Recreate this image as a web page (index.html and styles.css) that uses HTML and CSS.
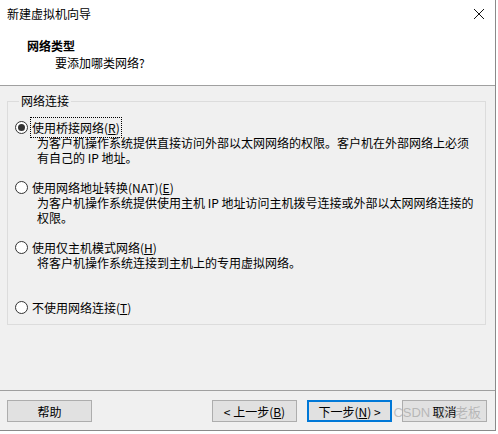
FILE: index.html
```html
<!DOCTYPE html>
<html lang="zh-CN">
<head>
    <meta charset="UTF-8">
    <title>新建虚拟机向导</title>
    <link rel="stylesheet" href="styles.css">
</head>
<body>
    <div class="wizard">
        <div class="wizard-top">
            <div class="titlebar">
                <span class="title">新建虚拟机向导</span>
                <svg class="close" width="12" height="12" viewBox="0 0 12 12">
                    <path d="M1 1 L11 11 M11 1 L1 11" stroke="#111" stroke-width="1" fill="none"/>
                </svg>
            </div>
            <div class="header">
                <div class="header-title">网络类型</div>
                <div class="header-sub">要添加哪类网络?</div>
            </div>
        </div>

        <div class="wizard-body">
            <fieldset class="group">
                <legend>网络连接</legend>
                <div class="options">
                    <div class="option">
                        <div class="option-label">
                            <span class="radio checked"></span>
                            <span class="focus">使用桥接网络(<u>R</u>)</span>
                        </div>
                        <div class="option-desc">为客户机操作系统提供直接访问外部以太网网络的权限。客户机在外部网络上必须<br>有自己的 IP 地址。</div>
                    </div>
                    <div class="option">
                        <div class="option-label">
                            <span class="radio"></span>
                            <span>使用网络地址转换(NAT)(<u>E</u>)</span>
                        </div>
                        <div class="option-desc">为客户机操作系统提供使用主机 IP 地址访问主机拨号连接或外部以太网网络连接的<br>权限。</div>
                    </div>
                    <div class="option">
                        <div class="option-label">
                            <span class="radio"></span>
                            <span>使用仅主机模式网络(<u>H</u>)</span>
                        </div>
                        <div class="option-desc">将客户机操作系统连接到主机上的专用虚拟网络。</div>
                    </div>
                    <div class="option">
                        <div class="option-label">
                            <span class="radio"></span>
                            <span>不使用网络连接(<u>T</u>)</span>
                        </div>
                    </div>
                </div>
            </fieldset>
        </div>

        <div class="wizard-footer">
            <button class="btn">帮助</button>
            <div class="nav-buttons">
                <button class="btn">&lt; 上一步(<u>B</u>)</button>
                <button class="btn default">下一步(<u>N</u>) &gt;</button>
                <button class="btn">取消</button>
            </div>
            <span class="watermark">CSDN @Z老板</span>
        </div>
    </div>
</body>
</html>
```

FILE: styles.css
```css
* {
    box-sizing: border-box;
    margin: 0;
    padding: 0;
}

body {
    font-family: "Noto Sans CJK SC", "Liberation Sans", sans-serif;
    font-size: 12px;
    color: #000;
    background: #fff;
}

.wizard {
    width: 496px;
    height: 431px;
    background: #f0f0f0;
    border-right: 1px solid #8a8a8a;
    border-bottom: 1px solid #8a8a8a;
    display: flex;
    flex-direction: column;
    position: relative;
}

.wizard-top {
    height: 86px;
    background: #fff;
    border-bottom: 1px solid #a0a0a0;
}

.titlebar {
    height: 27px;
    display: flex;
    align-items: center;
    justify-content: space-between;
    padding: 0 10px 0 7px;
}

.header {
    padding: 10px 0 0 27px;
}

.header-title {
    font-weight: bold;
    line-height: 17px;
}

.header-sub {
    line-height: 17px;
    padding-left: 28px;
}

.wizard-body {
    padding: 7px 9px 0 7px;
}

.group {
    border: 1px solid #dcdcdc;
    padding: 10px 7px 9px 7px;
}

.group legend {
    line-height: 16px;
    margin-left: 4px;
    padding: 0 2px;
}

.options {
    display: grid;
    grid-template-rows: repeat(3, 60px) auto;
}

.option-label {
    display: flex;
    align-items: center;
    gap: 4px;
    height: 16px;
}

.radio {
    width: 13px;
    height: 13px;
    border: 1px solid #333;
    border-radius: 50%;
    background: #fff;
    display: flex;
    align-items: center;
    justify-content: center;
}

.radio.checked::after {
    content: "";
    width: 7px;
    height: 7px;
    border-radius: 50%;
    background: #333;
}

.focus {
    outline: 1px dotted #000;
    outline-offset: 1px;
}

.option-desc {
    line-height: 15px;
    padding-left: 22px;
    white-space: nowrap;
}

.wizard-footer {
    margin-top: auto;
    height: 40px;
    border-top: 1px solid #a0a0a0;
    display: flex;
    justify-content: space-between;
    padding: 9px 8px 0 7px;
}

.nav-buttons {
    display: flex;
    gap: 10px;
}

.btn {
    width: 85px;
    height: 22px;
    background: #e1e1e1;
    border: 1px solid #adadad;
    font-family: inherit;
    font-size: 12px;
    color: #000;
}

.btn.default {
    border: 2px solid #0078d7;
}

.watermark {
    position: absolute;
    right: 14px;
    bottom: 9px;
    font-size: 13px;
    color: rgba(140, 140, 140, 0.5);
    font-family: "Liberation Sans", "Noto Sans CJK SC", sans-serif;
    pointer-events: none;
}
```
